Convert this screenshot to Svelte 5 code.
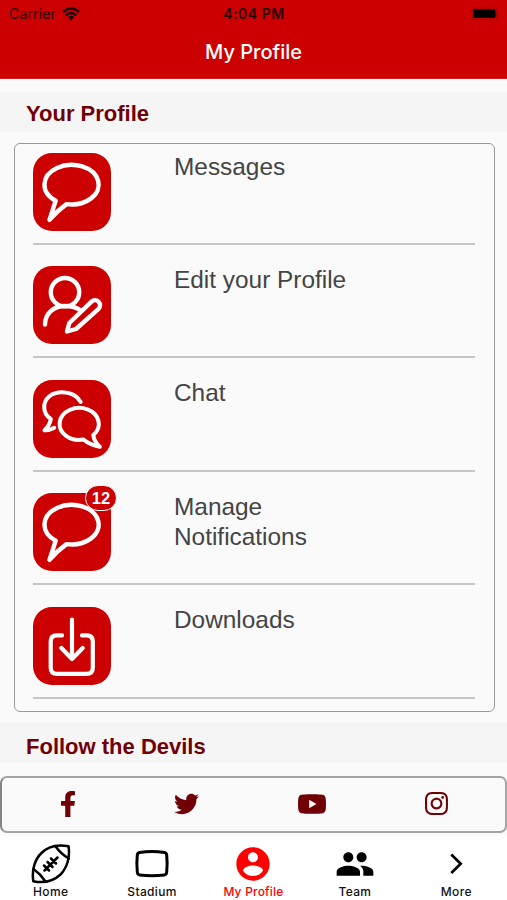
<script>
  const bubble = 'M22.7 47.7 A27.1 19.8 0 1 1 33.5 51.1 Q24 58 16.5 66.8 Q19.5 58 22.7 47.7 Z';
  const rows = [
    { label: 'Messages', paths: [bubble], w: 4.4 },
    {
      label: 'Edit your Profile',
      w: 4.4,
      paths: [
        'M46.2 26.2 A14.2 14.2 0 1 1 17.8 26.2 A14.2 14.2 0 1 1 46.2 26.2 Z',
        'M12 58.5 C12 48 20 40 32 40 Q42 40 47.5 44.5',
        'M34 65.5 L36.3 57 L58.5 35.7 A5 5 0 0 1 65.6 42.8 L43 63 Z'
      ]
    },
    {
      label: 'Chat',
      w: 4,
      paths: [
        'M47.7 22 C44 15.5 37 12.3 29 12.3 C18.5 12.3 11.2 18.5 11.2 27 Q11.2 34.5 17.8 39 Q17 45 11.5 50.3 Q16.5 50.5 21.3 47.8',
        'M60.3 55 A19.6 16 0 1 0 50.5 59.5 Q57 65 66.8 66.8 Q61 61.5 60.3 55 Z'
      ]
    },
    { label: 'Manage Notifications', paths: [bubble], w: 4.4, badge: 12 },
    {
      label: 'Downloads',
      w: 4.2,
      paths: [
        'M29 28.4 H24 Q17.7 28.4 17.7 34.6 V60.7 Q17.7 66.9 24 66.9 H53.5 Q59.8 66.9 59.8 60.7 V34.6 Q59.8 28.4 53.5 28.4 H49',
        'M39 12.5 V52 M28.3 41 L39 52 L49.7 41'
      ]
    }
  ];
</script>

<div class="app">
  <header>
    <div class="status">
      <div class="carrier">
        <span>Carrier</span>
        <svg width="18" height="14" viewBox="0 0 18 14" fill="none" stroke="#180000" stroke-width="2.5">
          <path d="M0.9 5.1 Q9 -2.1 17.1 5.1" />
          <path d="M3.8 8.2 Q9 3.7 14.2 8.2" />
          <path d="M5.9 10 Q9 7.5 12.1 10 L9 13.5 Z" fill="#180000" stroke="none" />
        </svg>
      </div>
      <span class="time">4:04 PM</span>
      <svg class="battery" width="30" height="14" viewBox="0 0 30 14">
        <rect x="0.8" y="0.8" width="25" height="11.8" rx="3" fill="none" stroke="#960000" stroke-width="1" />
        <rect x="2" y="2.3" width="22.5" height="8.7" rx="1.8" fill="#000" />
        <path d="M27.2 4.8 Q28.8 6.7 27.2 8.6 Z" fill="#900000" />
      </svg>
    </div>
    <h1>My Profile</h1>
  </header>

  <h2>Your Profile</h2>

  <div class="card">
    {#each rows as row}
      <div class="row">
        <div class="tile">
          <svg width="78" height="78" viewBox="0 0 78 78" fill="none" stroke="#fff" stroke-width={row.w} stroke-linejoin="round" stroke-linecap="round">
            {#each row.paths as d}<path {d} />{/each}
          </svg>
          {#if row.badge}<span class="badge">{row.badge}</span>{/if}
        </div>
        <span class="label">{row.label}</span>
      </div>
    {/each}
  </div>

  <h2 class="follow">Follow the Devils</h2>

  <div class="social">
    <svg width="14" height="26" viewBox="22 0 272 512" preserveAspectRatio="none"><path d="M279.14 288l14.22-92.66h-88.91v-60.13c0-25.35 12.42-50.06 52.24-50.06h40.42V6.26S260.43 0 225.36 0c-73.22 0-121.08 44.38-121.08 124.72v70.62H22.89V288h81.39v224h100.17V288z" /></svg>
    <svg width="25" height="22" viewBox="0 48 512 416"><path d="M459.37 151.716c.325 4.548.325 9.097.325 13.645 0 138.72-105.583 298.558-298.558 298.558-59.452 0-114.68-17.219-161.137-47.106 8.447.974 16.568 1.299 25.34 1.299 49.055 0 94.213-16.568 130.274-44.832-46.132-.975-84.792-31.188-98.112-72.772 6.498.974 12.995 1.624 19.818 1.624 9.421 0 18.843-1.3 27.614-3.573-48.081-9.747-84.143-51.98-84.143-102.985v-1.299c13.969 7.797 30.214 12.67 47.431 13.319-28.264-18.843-46.781-51.005-46.781-87.391 0-19.492 5.197-37.36 14.294-52.954 51.655 63.675 129.3 105.258 216.365 109.807-1.624-7.797-2.599-15.918-2.599-24.04 0-57.828 46.782-104.934 104.934-104.934 30.213 0 57.502 12.67 76.67 33.137 23.715-4.548 46.456-13.32 66.599-25.34-7.798 24.366-24.366 44.833-46.132 57.827 21.117-2.273 41.584-8.122 60.426-16.243-14.292 20.791-32.161 39.308-52.628 54.253z" /></svg>
    <svg width="28" height="20" viewBox="14 64 547 384"><path d="M549.655 124.083c-6.281-23.65-24.787-42.276-48.284-48.597C458.781 64 288 64 288 64S117.22 64 74.629 75.486c-23.497 6.322-42.003 24.947-48.284 48.597-11.412 42.867-11.412 132.305-11.412 132.305s0 89.438 11.412 132.305c6.281 23.65 24.787 41.5 48.284 47.821C117.22 448 288 448 288 448s170.78 0 213.371-11.486c23.497-6.321 42.003-24.171 48.284-47.821 11.412-42.867 11.412-132.305 11.412-132.305s0-89.438-11.412-132.305zm-317.51 213.508V175.185l142.739 81.205-142.739 81.201z" /></svg>
    <svg width="23" height="23" viewBox="0 31 448 449"><path d="M224.1 141c-63.6 0-114.9 51.3-114.9 114.9s51.3 114.9 114.9 114.9S339 319.5 339 255.9 287.7 141 224.1 141zm0 189.6c-41.1 0-74.7-33.5-74.7-74.7s33.5-74.7 74.7-74.7 74.7 33.5 74.7 74.7-33.6 74.7-74.7 74.7zm146.4-194.3c0 14.9-12 26.8-26.8 26.8-14.9 0-26.8-12-26.8-26.8s12-26.8 26.8-26.8 26.8 12 26.8 26.8zm76.1 27.2c-1.7-35.9-9.9-67.7-36.2-93.9-26.2-26.2-58-34.4-93.9-36.2-37-2.1-147.9-2.1-184.9 0-35.8 1.7-67.6 9.9-93.9 36.1s-34.4 58-36.2 93.9c-2.1 37-2.1 147.9 0 184.9 1.7 35.9 9.9 67.7 36.2 93.9s58 34.4 93.9 36.2c37 2.1 147.9 2.1 184.9 0 35.9-1.7 67.7-9.9 93.9-36.2 26.2-26.2 34.4-58 36.2-93.9 2.1-37 2.1-147.8 0-184.8zM398.8 388c-7.8 19.6-22.9 34.7-42.6 42.6-29.5 11.7-99.5 9-132.1 9s-102.7 2.6-132.1-9c-19.6-7.8-34.7-22.9-42.6-42.6-11.7-29.5-9-99.5-9-132.1s-2.6-102.7 9-132.1c7.8-19.6 22.9-34.7 42.6-42.6 29.5-11.7 99.5-9 132.1-9s102.7-2.6 132.1 9c19.6 7.8 34.7 22.9 42.6 42.6 11.7 29.5 9 99.5 9 132.1s2.7 102.7-9 132.1z" /></svg>
  </div>

  <nav>
    <div class="tab">
      <svg width="40" height="40" viewBox="0 0 40 40" fill="none" stroke="#000" stroke-width="2.5" stroke-linecap="round" stroke-linejoin="round">
        <path d="M2.3 37.2 C0.5 26 4 15 10.5 9 C17 2.5 27 0.2 37.5 2.3 C39.3 13 36 24 29.5 30.5 C22.5 37 13 39.5 2.3 37.2 Z" />
        <path d="M24.5 2.2 Q29.5 9.5 37.8 14.5 M2.5 25 Q9.5 30 14.5 37.5" />
        <path d="M13.5 26.5 L26.5 13.5 M13 21.5 L18 26.5 M16.5 18 L21.5 23 M20 14.5 L25 19.5" />
      </svg>
      <span>Home</span>
    </div>
    <div class="tab">
      <svg width="40" height="40" viewBox="0 0 40 40" fill="none" stroke="#000" stroke-width="3">
        <path d="M7.5 8.4 Q20 6.5 32.5 8.4 Q34.5 8.7 34.7 11 Q35.6 19.5 34.7 28 Q34.5 30.6 32.5 30.9 Q20 32.5 7.5 30.9 Q5.5 30.6 5.3 28 Q4.4 19.5 5.3 11 Q5.5 8.7 7.5 8.4 Z" />
      </svg>
      <span>Stadium</span>
    </div>
    <div class="tab active">
      <svg width="40" height="40" viewBox="0 0 24 24" fill="#f00">
        <path d="M12 2C6.48 2 2 6.48 2 12s4.48 10 10 10 10-4.48 10-10S17.52 2 12 2zm0 3c1.66 0 3 1.34 3 3s-1.34 3-3 3-3-1.34-3-3 1.34-3 3-3zm0 14.2c-2.5 0-4.71-1.28-6-3.22.03-1.99 4-3.08 6-3.08 1.99 0 5.97 1.09 6 3.08-1.29 1.94-3.5 3.22-6 3.22z" />
      </svg>
      <span>My Profile</span>
    </div>
    <div class="tab">
      <svg width="40" height="40" viewBox="0 0 24 24">
        <path d="M16 11c1.66 0 2.99-1.34 2.99-3S17.66 5 16 5c-1.66 0-3 1.34-3 3s1.34 3 3 3zm-8 0c1.66 0 2.99-1.34 2.99-3S9.66 5 8 5C6.34 5 5 6.34 5 8s1.34 3 3 3zm0 2c-2.33 0-7 1.17-7 3.5V19h14v-2.5c0-2.33-4.67-3.5-7-3.5zm8 0c-.29 0-.62.02-.97.05 1.16.84 1.97 1.97 1.97 3.45V19h6v-2.5c0-2.33-4.67-3.5-7-3.5z" />
      </svg>
      <span>Team</span>
    </div>
    <div class="tab">
      <svg width="40" height="40" viewBox="0 0 40 40" fill="none" stroke="#000" stroke-width="2.7"><path d="M15.3 10.5 L24.7 19.8 L15.3 29" /></svg>
      <span>More</span>
    </div>
  </nav>
</div>

<style>
  :global(body) { background: #fafafa; }
  .app {
    width: 507px;
    height: 900px;
    overflow: hidden;
    background: #fafafa;
    font-family: "Liberation Sans", Arial, sans-serif;
    display: flex;
    flex-direction: column;
  }
  .app > * { flex-shrink: 0; box-sizing: border-box; }
  svg { display: block; }
  header {
    height: 79px;
    background: #c00;
    border-bottom: 1px solid #d42020;
    font-family: Inter, sans-serif;
  }
  .status {
    display: grid;
    grid-template-columns: 1fr auto 1fr;
    align-items: center;
    height: 27px;
    padding: 0 6px 0 9px;
    color: #280000;
    font-size: 14px;
    line-height: 27px;
  }
  .carrier { display: flex; align-items: center; gap: 6px; letter-spacing: 0.15px; }
  .time { margin-right: 2px; font-weight: 600; font-size: 14px; letter-spacing: 0.5px; }
  .battery { justify-self: end; }
  h1 {
    margin: 10px 0 0;
    text-align: center;
    color: #fff;
    font-size: 20px;
    line-height: 30px;
    font-weight: 500;
  }
  h2 {
    margin: 13px 0 0;
    height: 40px;
    padding-left: 26px;
    background: #f5f5f5;
    color: #700005;
    font-size: 22px;
    line-height: 43px;
    font-weight: 700;
  }
  .card {
    margin: 11px 12.5px 0 13.5px;
    height: 569px;
    border: 1.5px solid #999;
    border-radius: 6px;
    padding: 0 18.5px;
    overflow: hidden;
  }
  .row {
    box-sizing: border-box;
    display: flex;
    height: 113.6px;
    padding-top: 21.8px;
    border-bottom: 2px solid #c6c6c6;
  }
  .row:first-child { height: 100.5px; padding-top: 9.4px; }
  .tile {
    position: relative;
    width: 78px;
    height: 78px;
    border-radius: 19px;
    background: #c00;
  }
  .badge {
    position: absolute;
    box-sizing: border-box;
    left: 52px;
    top: -8.5px;
    width: 32px;
    height: 26px;
    border: 1.5px solid #fff;
    border-radius: 13px;
    background: #c00;
    color: #fff;
    font-size: 16.5px;
    line-height: 24px;
    font-weight: 700;
    text-align: center;
  }
  .label {
    width: 150px;
    margin-left: 63px;
    margin-top: -1.6px;
    color: #444;
    font-size: 24.4px;
    line-height: 30.6px;
  }
  .row:nth-child(2) .label { width: 200px; }
  .follow { margin-top: 11px; line-height: 48px; }
  .social {
    display: flex;
    align-items: center;
    justify-content: space-between;
    height: 57px;
    margin-top: 13px;
    padding: 0 57px 2px 59px;
    border: 2px solid #a4a4a4;
    border-left-color: #858585;
    border-radius: 7px;
    fill: #700005;
  }
  nav {
    display: grid;
    grid-template-columns: repeat(5, 1fr);
    height: 67px;
    padding-top: 10.5px;
    background: linear-gradient(#fafafa, #fff 8px);
    font-family: Inter, sans-serif;
  }
  .tab {
    display: flex;
    flex-direction: column;
    align-items: center;
    color: #111;
    font-size: 12px;
    line-height: 15px;
    font-weight: 500;
    letter-spacing: 0.35px;
  }
  .tab span { white-space: nowrap; }
  .active { color: #f00; letter-spacing: 0.2px; }
</style>
